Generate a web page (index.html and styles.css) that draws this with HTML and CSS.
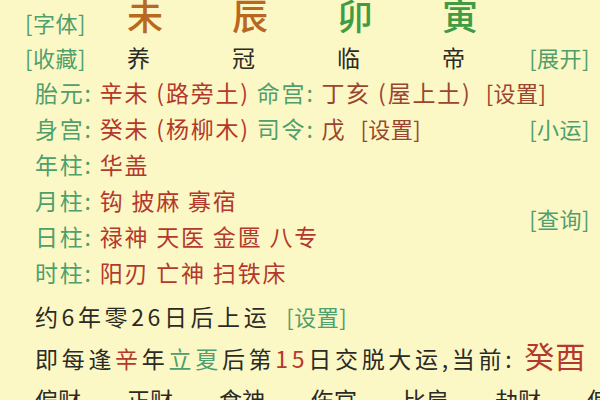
FILE: index.html
```html
<!DOCTYPE html>
<html lang="zh">
<head>
<meta charset="utf-8">
<link rel="stylesheet" href="styles.css">
</head>
<body>
<div class="page">
  <div class="head head1">
    <span class="btn">[字体]</span>
    <span class="gz orange">未</span>
    <span class="gz orange">辰</span>
    <span class="gz green2">卯</span>
    <span class="gz green2">寅</span>
  </div>
  <div class="head head2">
    <span class="btn">[收藏]</span>
    <span class="cs">养</span>
    <span class="cs">冠</span>
    <span class="cs">临</span>
    <span class="cs">帝</span>
    <span class="btn end">[展开]</span>
  </div>

  <div class="line">
    <span class="lbl">胎元: </span><span class="red">辛未 (路旁土)</span><span class="lbl"> 命宫: </span><span class="brown">丁亥 (屋上土)</span><span class="brown set">[设置]</span>
  </div>
  <div class="line split">
    <div><span class="lbl">身宫: </span><span class="red">癸未 (杨柳木)</span><span class="lbl"> 司令: </span><span class="brown">戊</span><span class="brown set">[设置]</span></div>
    <span class="btn">[小运]</span>
  </div>

  <div class="block">
    <div class="list">
      <div class="line"><span class="lbl">年柱: </span><span class="red">华盖</span></div>
      <div class="line"><span class="lbl">月柱: </span><span class="red">钩 披麻 寡宿</span></div>
      <div class="line"><span class="lbl">日柱: </span><span class="red">禄神 天医 金匮 八专</span></div>
      <div class="line"><span class="lbl">时柱: </span><span class="red">阳刃 亡神 扫铁床</span></div>
    </div>
    <span class="btn">[查询]</span>
  </div>

  <div class="line dark gap yun">约6年零26日后上运<span class="btn set2">[设置]</span></div>
  <div class="line dark meet">即每逢<span class="red">辛</span>年<span class="green3">立夏</span>后第<span class="red">15</span>日交脱大运,当前: <span class="red now">癸酉</span></div>
  <div class="gods">
    <span>偏财</span><span>正财</span><span>食神</span><span>伤官</span><span>比肩</span><span>劫财</span><span>偏印</span>
  </div>
</div>
</body>
</html>
```

FILE: styles.css
```css
html, body {
  margin: 0;
  padding: 0;
  background: #fcf8c6;
  overflow: hidden;
}
body {
  width: 600px;
  height: 400px;
  font-family: "Noto Sans CJK SC", "Noto Sans", sans-serif;
  color: #2b2b25;
}
.page {
  padding: 0 10px 0 0;
}
.head {
  display: grid;
  grid-template-columns: 102px 105px 105px 105px 1fr auto;
  padding-left: 25px;
  align-items: center;
}
.head1 {
  height: 40px;
  margin-top: -6px;
}
.head1 .btn {
  margin-top: 16px;
}
.head2 {
  height: 34px;
  margin-top: 6px;
}
.btn {
  color: #4f9f6d;
  font-size: 22px;
  line-height: 24px;
  letter-spacing: 0.5px;
  white-space: nowrap;
}
.gz {
  font-size: 36px;
  line-height: 40px;
  font-weight: 500;
}
.orange { color: #b9681f; }
.green2 { color: #3f9c45; }
.cs {
  font-size: 23px;
  line-height: 34px;
  color: #2b2b25;
}
.line {
  font-size: 23px;
  line-height: 36px;
  height: 36px;
  padding-left: 35px;
  letter-spacing: 1.8px;
  white-space: nowrap;
}
.lbl { color: #4f9f6d; }
.red { color: #b5382c; }
.brown { color: #9a4530; }
.green3 { color: #4f9f6d; }
.set { margin-left: 14px; font-size: 22px; letter-spacing: 0.5px; }
.split {
  display: flex;
  justify-content: space-between;
  align-items: center;
}
.block {
  display: flex;
  justify-content: space-between;
  align-items: center;
}
.dark { color: #2b2b25; }
.gap { margin-top: 8px; }
.yun { letter-spacing: 3.6px; }
.set2 { margin-left: 16px; letter-spacing: 0.5px; }
.meet {
  letter-spacing: 3.7px;
  margin-top: 3px;
}
.now {
  font-size: 30px;
  letter-spacing: 1px;
}
.gods {
  display: flex;
  gap: 46px;
  padding-left: 35px;
  margin-top: 8px;
  font-size: 23px;
  line-height: 36px;
  color: #2b2b25;
  white-space: nowrap;
}
```
